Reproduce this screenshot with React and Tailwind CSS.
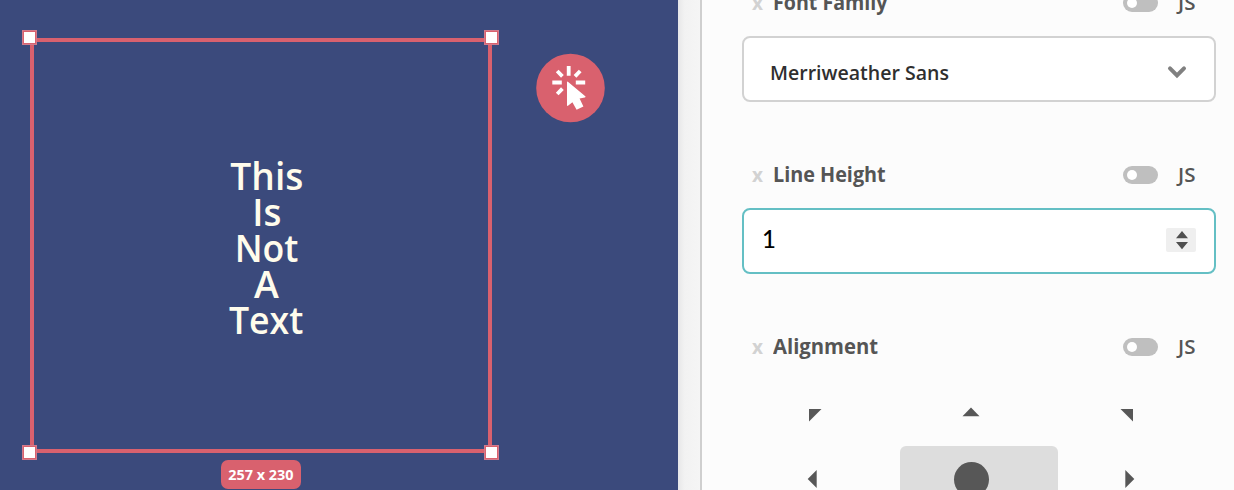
const LINES = [
  { text: "This", fit: "scale-x-[0.99]" },
  { text: "Is", fit: "scale-x-[0.98]" },
  { text: "Not", fit: "scale-x-[0.95]" },
  { text: "A", fit: "scale-x-[1]" },
  { text: "Text", fit: "scale-x-[0.95]" },
];

function Handle({ place }) {
  return <span className={`absolute size-[15px] border-2 border-[#d9616e] bg-white outline-1 -outline-offset-1 outline-[#d27b8c] ${place}`} />;
}

function Canvas() {
  return (
    <main className="relative h-full w-[678px] shrink-0 overflow-hidden bg-[#3b4a7c]">
      <div className="absolute left-[30px] top-[38px] flex h-[415px] w-[462px] items-center justify-center border-4 border-[#d9616e]">
        <div className="relative left-[5.5px] top-[2.5px] flex flex-col items-center text-[37.5px] font-semibold leading-[36px] text-[#fffcec]">
          {LINES.map((l) => (
            <span key={l.text} className={l.fit}>{l.text}</span>
          ))}
        </div>
      </div>
      <Handle place="left-[22px] top-[30px]" />
      <Handle place="left-[484px] top-[30px]" />
      <Handle place="left-[22px] top-[445px]" />
      <Handle place="left-[484px] top-[445px]" />
      <div className="absolute left-[221px] top-[460px] flex h-[29px] w-[80px] items-center justify-center rounded-[7px] bg-[#d9616e] text-[15px] font-bold text-white">
        <span className="scale-x-[0.96] whitespace-nowrap">257 x 230</span>
      </div>
      <svg className="absolute left-[536px] top-[53px]" width="70" height="70" viewBox="536 53 70 70">
        <circle cx="570.5" cy="88" r="34.3" fill="#d9616e" />
        <path d="M568.7 66v9.8M552.3 82.5h9.5M575.8 82.5h9.4M557.2 71l5.2 5.4M580.2 71l-5.2 5.4M557.2 94l5.2-5.4" stroke="#fff" strokeWidth="3.8" />
        <path d="M567 82.3Q567 81 568.2 82L585.3 96.2Q586.2 97.2 584.8 97.4L579.6 98.6 583.4 106.4 576.6 109.8 572.4 102.2 568 105.8Q567 106.2 567 105Z" fill="#fff" />
      </svg>
    </main>
  );
}

function Label({ children, fit }) {
  return (
    <div className="flex h-[30px] items-center text-[20.5px]">
      <span className="w-[22px] pl-px text-[19px] font-bold text-[#d2d2d2]">x</span>
      <span className={`-mt-[2px] origin-left whitespace-nowrap font-bold text-[#555] ${fit}`}>{children}</span>
      <span className="ml-auto flex h-[18px] w-[35px] items-center rounded-full bg-[#bfbfbf] pl-[4px]">
        <span className="size-[10px] rounded-full bg-white" />
      </span>
      <span className="-mt-[2px] ml-[20px] w-[18px] font-semibold text-[#555]">JS</span>
    </div>
  );
}

function Arrow({ points }) {
  return (
    <div className="flex h-[66px] w-[158px] items-center justify-center pr-4">
      <svg width="30" height="30" viewBox="-15 -15 30 30"><polygon points={points} fill="#575757" /></svg>
    </div>
  );
}

function Panel() {
  return (
    <aside className="h-full flex-1 overflow-hidden border-l-2 border-[#cfcfcf] bg-[#fcfcfc] pl-[40px] pr-[18px]">
      <div className="-mt-[12px] pl-[9px] pr-[20px]"><Label fit="scale-x-[0.957]">Font Family</Label></div>
      <div className="mt-[18px] flex h-[66px] items-center rounded-[8px] border-2 border-[#d2d2d2] bg-white pl-[26px] pr-[27px] pt-[6px] text-[20.5px] font-semibold text-[#2f2f2f]">
        <span className="origin-left scale-x-[0.953] whitespace-nowrap">Merriweather Sans</span>
        <svg className="ml-auto" width="20" height="14" viewBox="0 0 20 14"><path d="M3 3.3 10 10.3 17 3.3" fill="none" stroke="#808080" strokeWidth="4" strokeLinecap="round" /></svg>
      </div>
      <div className="mt-[58px] pl-[9px] pr-[20px]"><Label fit="scale-x-[0.965]">Line Height</Label></div>
      <div className="mt-[18px] flex h-[66px] items-center rounded-[8px] border-2 border-[#64bfc4] bg-white pl-[18px] pr-[18px] text-[24px] text-black">
        <span className="-mt-[4px] font-['Lato',sans-serif] font-medium">1</span>
        <span className="-mt-[2px] ml-auto flex h-[24px] w-[30px] items-center justify-center rounded-[2px] bg-[#efefef] pl-[2px]">
          <svg width="12" height="20" viewBox="0 0 12 20"><path d="M0 8.2 6 1 12 8.2ZM0 12 6 19.2 12 12Z" fill="#4f4f4f" /></svg>
        </span>
      </div>
      <div className="mt-[58px] pl-[9px] pr-[20px]"><Label fit="scale-x-[0.988]">Alignment</Label></div>
      <div className="mt-[18px] grid grid-cols-[158px_158px_158px]">
        <Arrow points="-4,-4 8.5,-4 -4,8.5" />
        <Arrow points="-8.5,3.3 0,-5.5 8.5,3.3" />
        <Arrow points="-8.5,-4 4,-4 4,8.5" />
        <Arrow points="-5.3,0 3.7,-9 3.7,9" />
        <div className="flex h-[66px] items-center justify-center rounded-[6px] bg-[#ddd] pr-4">
          <span className="size-[35px] rounded-full bg-[#575757]" />
        </div>
        <Arrow points="-3.7,-9 5.3,0 -3.7,9" />
      </div>
    </aside>
  );
}

export default function App() {
  return (
    <div className="flex h-[490px] w-[1234px] overflow-hidden bg-[#f5f5f5] font-['Open_Sans',sans-serif]">
      <Canvas />
      <div className="w-[22px] shrink-0 bg-linear-to-r from-[#e7e7e8] via-[#f2f2f2] via-30% to-[#f5f5f5]" />
      <Panel />
    </div>
  );
}
